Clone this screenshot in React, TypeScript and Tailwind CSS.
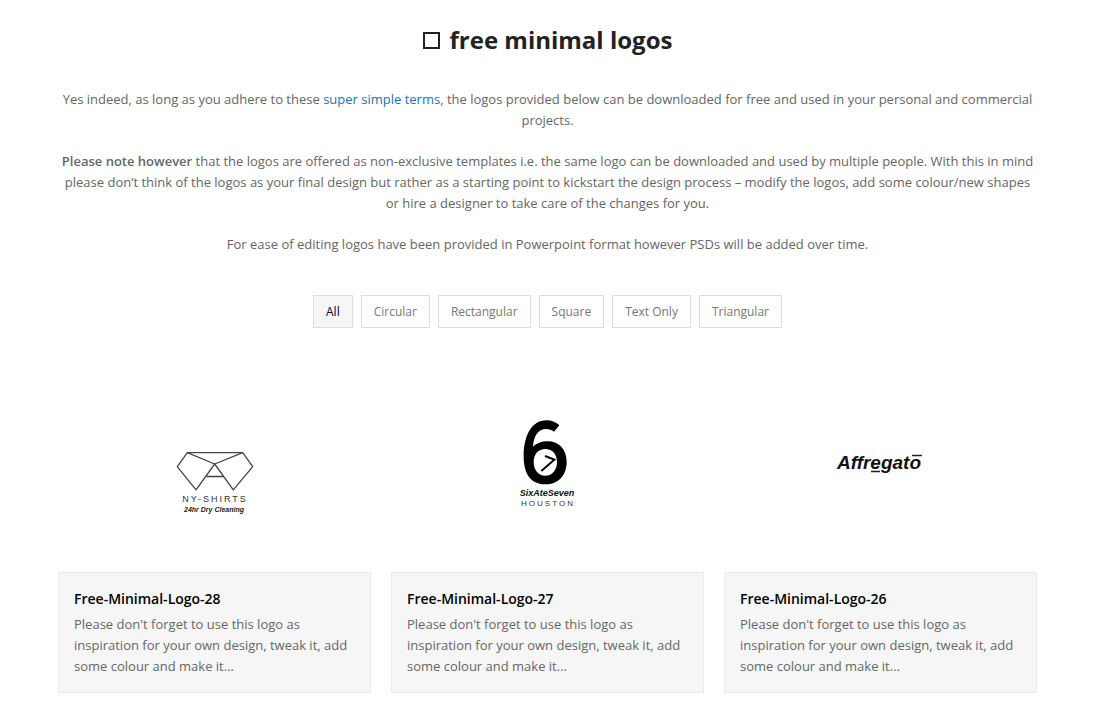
import { useState } from "react";
import type { ReactNode } from "react";

const filters = ["All", "Circular", "Rectangular", "Square", "Text Only", "Triangular"];

function ShirtsLogo() {
  return (
    <svg viewBox="0 0 313 235" className="block w-full" role="img" aria-label="NY-Shirts logo">
      <g fill="none" stroke="#444" strokeWidth="1.3" strokeLinejoin="round">
        <path d="M129.3 115.7H184.7L194.7 129.7L175.3 152.8L156.7 127L138 152.8L119.3 129.7Z" />
        <path d="M129.3 115.7L156.7 127L184.7 115.7M148.5 139.5H165.5" />
      </g>
      <g textAnchor="middle" className="font-['Liberation_Sans',sans-serif]">
        <text x="157" y="165" fill="#333" className="text-[9px] tracking-[2px]">NY-SHIRTS</text>
        <text x="156" y="175" fill="#222" className="text-[7px] font-bold italic">24hr Dry Cleaning</text>
      </g>
    </svg>
  );
}

function SixLogo() {
  return (
    <svg viewBox="0 0 313 235" className="block w-full" role="img" aria-label="SixAteSeven Houston logo">
      <g transform="translate(114 73) scale(0.3333)">
        <path
          fillRule="evenodd"
          d="M163 46C152 36 140 31 124 31C80 31 56 78 56 138C56 196 80 223 121 223C161 223 185 195 185 156C185 118 161 94 129 94C109 94 95 100 84 110C86 80 98 57 124 57C133 57 140 60 147 65ZM121 117C142 117 156 133 156 156C156 180 142 197 121 197C100 197 86 180 86 156C86 133 100 117 121 117Z"
        />
        <path d="M120 138L148 149L109 183" fill="none" stroke="#000" strokeWidth="6" />
      </g>
      <g textAnchor="middle" className="font-['Liberation_Sans',sans-serif]">
        <text x="156" y="159" fill="#111" className="text-[9px] font-bold italic">SixAteSeven</text>
        <text x="157" y="169" fill="#333" className="text-[8px] tracking-[2px]">HOUSTON</text>
      </g>
    </svg>
  );
}

function AffregatoLogo() {
  return (
    <svg viewBox="0 0 313 235" className="block w-full" role="img" aria-label="Affregato logo">
      <text x="155" y="132" textAnchor="middle" fill="#111" className="font-['Liberation_Sans',sans-serif] text-[19px] font-bold italic">
        Affregato
      </text>
      <path d="M147 134.5H156M188 118.5H198" stroke="#222" strokeWidth="1.4" />
    </svg>
  );
}

function LogoCard({ title, children }: { title: string; children: ReactNode }) {
  return (
    <article>
      {children}
      <div className="border border-[#ebebeb] bg-[#f6f6f6] px-[15px] py-[15px]">
        <h2 className="mb-[5px] text-sm leading-[21px] font-semibold text-black">{title}</h2>
        <p>Please don't forget to use this logo as inspiration for your own design, tweak it, add some colour and make it...</p>
      </div>
    </article>
  );
}

export default function App() {
  const [active, setActive] = useState("All");
  return (
    <main className="bg-white pt-5 pr-[69px] pb-7 pl-[58px] font-['Open_Sans',sans-serif] text-[13px] leading-[21px] text-[#666]">
      <h1 className="flex items-center justify-center gap-[10px] text-2xl leading-10 font-bold text-[#222]">
        <span className="size-[17px] border-2 border-[#222]" aria-hidden="true" />
        free minimal logos
      </h1>
      <div className="mt-[29px] space-y-5 text-center">
        <p>
          Yes indeed, as long as you adhere to these{" "}
          <a href="#terms" className="text-[#1b72b5]">super simple terms</a>, the logos provided below can be downloaded for free and used in your personal and commercial projects.
        </p>
        <p>
          <strong className="font-semibold">Please note however</strong> that the logos are offered as non-exclusive templates i.e. the same logo can be downloaded and used by multiple people. With this in mind please don’t think of the logos as your final design but rather as a starting point to kickstart the design process – modify the logos, add some colour/new shapes or hire a designer to take care of the changes for you.
        </p>
        <p>For ease of editing logos have been provided in Powerpoint format however PSDs will be added over time.</p>
      </div>
      <div className="mt-10 flex flex-wrap justify-center gap-2">
        {filters.map((name) => (
          <button
            key={name}
            type="button"
            aria-pressed={active === name}
            onClick={() => setActive(name)}
            className={
              active === name
                ? "border border-[#ddd] bg-[#f6f6f6] px-3 py-[5px] text-xs leading-[21px] text-[#000033]"
                : "border border-[#ddd] bg-white px-3 py-[5px] text-xs leading-[21px] text-[#777]"
            }
          >
            {name}
          </button>
        ))}
      </div>
      <section className="mt-[9px] grid grid-cols-3 gap-5">
        <LogoCard title="Free-Minimal-Logo-28"><ShirtsLogo /></LogoCard>
        <LogoCard title="Free-Minimal-Logo-27"><SixLogo /></LogoCard>
        <LogoCard title="Free-Minimal-Logo-26"><AffregatoLogo /></LogoCard>
      </section>
    </main>
  );
}
